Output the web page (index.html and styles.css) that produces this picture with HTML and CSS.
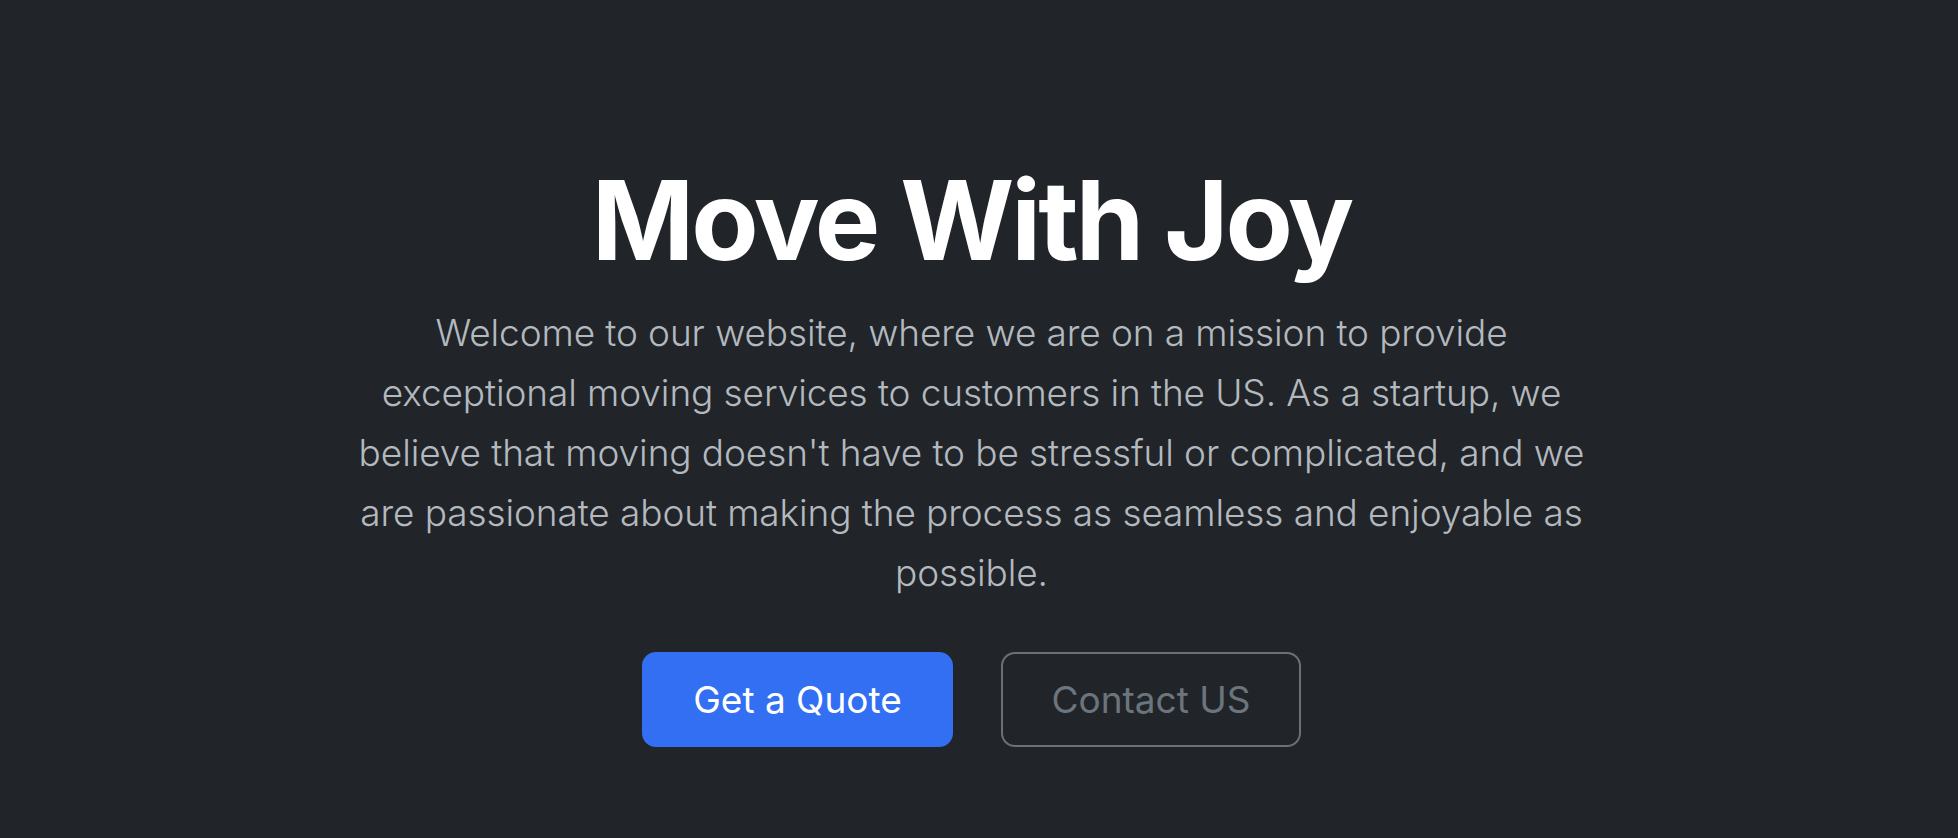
FILE: index.html
```html
<!DOCTYPE html>
<html lang="en">
<head>
<meta charset="utf-8">
<title>Move With Joy</title>
<link rel="stylesheet" href="styles.css">
</head>
<body>
<main class="hero">
  <h1 class="hero-title">Move With Joy</h1>
  <div class="hero-body">
    <p class="hero-lead">Welcome to our website, where we are on a mission to provide exceptional moving services to customers in the US. As a startup, we believe that moving doesn't have to be stressful or complicated, and we are passionate about making the process as seamless and enjoyable as possible.</p>
    <div class="hero-actions">
      <button class="btn btn-primary" type="button">Get a Quote</button>
      <button class="btn btn-outline" type="button">Contact US</button>
    </div>
  </div>
</main>
</body>
</html>
```

FILE: styles.css
```css
html, body {
  margin: 0;
  padding: 0;
  height: 100%;
  background: #212529;
}

body {
  font-family: Inter, "Noto Sans", "Liberation Sans", sans-serif;
  color: #dee2e6;
  overflow: hidden;
}

.hero {
  box-sizing: border-box;
  padding: 154px 15px 0 0;
  display: flex;
  flex-direction: column;
  align-items: center;
  text-align: center;
}

.hero-title {
  margin: 0 0 17px;
  font-size: 110px;
  line-height: 1.2;
  font-weight: 700;
  color: #ffffff;
  letter-spacing: -3px;
}

.hero-body {
  width: 1270px;
  display: flex;
  flex-direction: column;
  align-items: center;
}

.hero-lead {
  margin: 0 0 49px;
  font-size: 37px;
  line-height: 60px;
  font-weight: 300;
  color: #b3b9bf;
  letter-spacing: -0.1px;
}

.hero-actions {
  display: flex;
  gap: 48px;
  justify-content: center;
}

.btn {
  box-sizing: border-box;
  font-family: inherit;
  font-size: 37px;
  line-height: 60px;
  font-weight: 400;
  height: 95px;
  padding: 0 30px;
  border-radius: 14px;
  border: 2px solid transparent;
  cursor: pointer;
}

.btn-primary {
  background: #336ff3;
  border-color: #336ff3;
  color: #ffffff;
  width: 311px;
}

.btn-outline {
  background: transparent;
  border-color: #6c6f74;
  color: #6c757d;
  width: 300px;
}
```
